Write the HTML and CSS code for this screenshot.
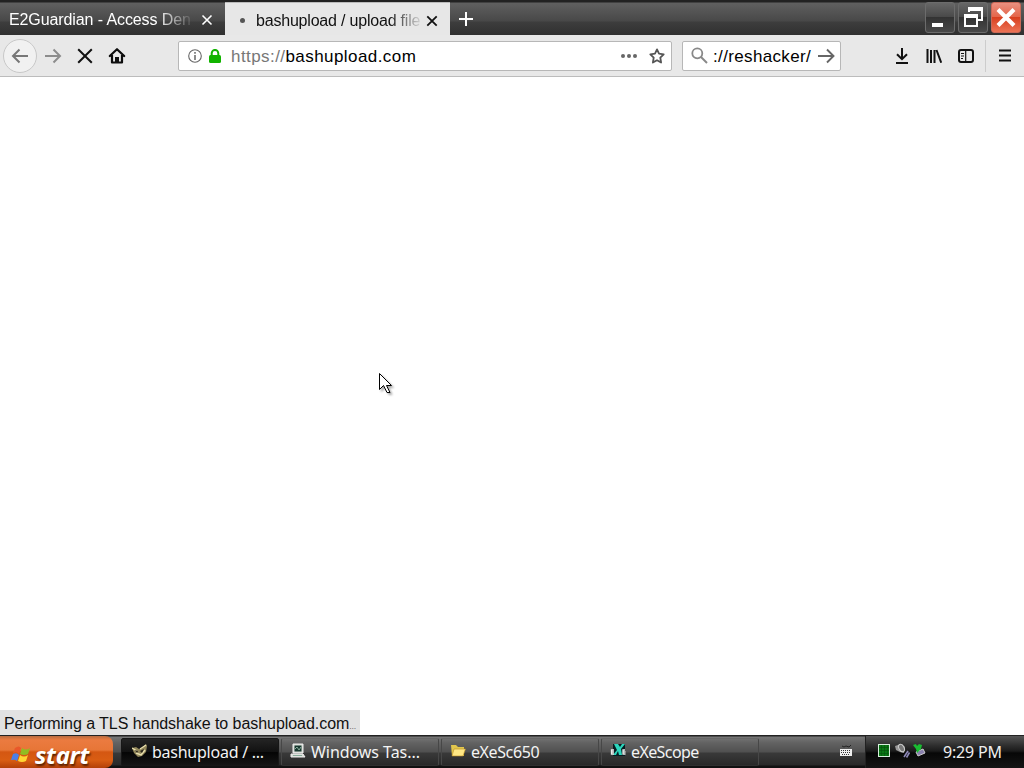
FILE: index.html
```html
<!DOCTYPE html>
<html lang="en">
<head>
<meta charset="utf-8">
<title>bashupload / upload files</title>
<link rel="stylesheet" href="styles.css">
</head>
<body>
<div class="screen">
  <header class="tabs">
    <div class="tab">
      <span class="tab-title">E2Guardian - Access Den</span>
      <svg class="tab-close" width="12" height="12" viewBox="0 0 12 12"><path d="M1.500 1.500l9 9M10.500 1.500l-9 9" stroke="#fff" stroke-width="1.600"/></svg>
    </div>
    <div class="tab active">
      <span class="loading"></span>
      <span class="tab-title">bashupload / upload file</span>
      <svg class="tab-close" width="12" height="12" viewBox="0 0 12 12"><path d="M1.300 1.300l9.400 9.400M10.700 1.300l-9.400 9.400" stroke="#111" stroke-width="1.800"/></svg>
    </div>
    <svg class="new-tab" width="14" height="14" viewBox="0 0 14 14"><path d="M7 0v14M0 7h14" stroke="#fff" stroke-width="2"/></svg>
    <div class="window-buttons">
      <div class="wb"><svg width="30" height="30" viewBox="0 0 30 30"><path d="M7 21h11v4H7z" fill="#fff"/></svg></div>
      <div class="wb"><svg width="30" height="30" viewBox="0 0 30 30"><g fill="none" stroke="#fff"><path d="M11 10V6h13v12h-4" stroke-width="2"/><path d="M10 7h15" stroke-width="4"/><path d="M7 13h12v11H7z" stroke-width="2"/><path d="M6 14h14" stroke-width="4"/></g></svg></div>
      <div class="wb close"><svg width="30" height="30" viewBox="0 0 30 30"><path d="M7 7.500l16 16M23 7.500l-16 16" stroke="#fff" stroke-width="4.200"/></svg></div>
    </div>
  </header>
  <nav class="toolbar">
    <div class="back"><svg width="18" height="16" viewBox="0 0 18 16"><path d="M17 8H2M8.500 1.500L2 8l6.500 6.500" fill="none" stroke="#777" stroke-width="2"/></svg></div>
    <svg class="forward" width="18" height="16" viewBox="0 0 18 16"><path d="M1 8h15M9.500 1.500L16 8l-6.500 6.500" fill="none" stroke="#8c8c8c" stroke-width="2"/></svg>
    <svg class="stop" width="16" height="16" viewBox="0 0 16 16"><path d="M1.200 1.200l13.600 13.600M14.800 1.200L1.200 14.800" stroke="#111" stroke-width="2"/></svg>
    <svg class="home" width="18" height="18" viewBox="0 0 18 18"><path d="M1.800 9L9 2.200 16.200 9M4 8v7.500h10V8" fill="none" stroke="#0c0c0c" stroke-width="2.200" stroke-linecap="round" stroke-linejoin="round"/><path d="M7 16v-6h4v6z" fill="#111"/></svg>
    <div class="url">
      <svg class="info" width="14" height="14" viewBox="0 0 14 14"><circle cx="7" cy="7" r="6.300" fill="none" stroke="#666" stroke-width="1.100"/><path d="M7 6v5M7 3v1.700" stroke="#666" stroke-width="1.500"/></svg>
      <svg class="lock" width="12" height="14" viewBox="0 0 12 14"><rect y="6" width="12" height="8" rx="1.500" fill="#12b400"/><path d="M2.700 7V4.200a3.300 3.300 0 016.600 0V7" fill="none" stroke="#12b400" stroke-width="2"/></svg>
      <span class="address"><span class="scheme">https://</span>bashupload.com</span>
      <svg class="dots" width="16" height="4" viewBox="0 0 16 4"><g fill="#666"><circle cx="2" cy="2" r="2"/><circle cx="8" cy="2" r="2"/><circle cx="14" cy="2" r="2"/></g></svg>
      <svg class="star" width="16" height="16" viewBox="0 0 16 16"><path d="M8 1.400l2 4.300 4.700.6-3.400 3.300.8 4.900L8 12.200l-4.100 2.300.8-4.900L1.300 6.300 6 5.700z" fill="none" stroke="#555" stroke-width="1.800" stroke-linejoin="round"/></svg>
    </div>
    <div class="search">
      <svg width="17" height="17" viewBox="0 0 17 17"><circle cx="6.300" cy="6.300" r="5" fill="none" stroke="#888" stroke-width="1.800"/><path d="M10 10l6 6" stroke="#888" stroke-width="2"/></svg>
      <span class="query">://reshacker/</span>
      <svg class="go" width="17" height="16" viewBox="0 0 17 16"><path d="M0 8h15M9 1.500L15.500 8 9 14.500" fill="none" stroke="#666" stroke-width="1.900"/></svg>
    </div>
    <div class="tools">
      <svg width="14" height="16" viewBox="0 0 14 16"><path d="M7 0v11M2 6.200l5 5 5-5M1 15h12" fill="none" stroke="#111" stroke-width="2"/></svg>
      <svg width="16" height="16" viewBox="0 0 16 16"><path d="M1.500 1v14M5 2v13M8.500 2v13M10.500 2l4.700 12.700" fill="none" stroke="#111" stroke-width="2"/></svg>
      <svg width="16" height="14" viewBox="0 0 16 14"><rect x="1" y="1" width="14" height="12" rx="2" fill="none" stroke="#111" stroke-width="2"/><path d="M7.700 1v12M3 4.500h3M3 7h3M3 9.500h2" stroke="#111" stroke-width="1.200"/></svg>
      <span class="divider"></span>
      <svg width="12" height="13" viewBox="0 0 12 13"><path d="M0 1.500h12M0 6.500h12M0 11.500h12" stroke="#111" stroke-width="2"/></svg>
    </div>
  </nav>
  <main class="page"><div class="status">Performing a TLS handshake to bashupload.com<span class="ellipsis">…</span></div></main>
  <footer class="taskbar">
    <div class="start">
      <svg width="20" height="19" viewBox="0 0 20 19"><path d="M4 3q4-3 6 0L8 9Q6 6 2 8z" fill="#e9582a"/><path d="M11 3q4 3 8 0l-2 6q-4 2-8 0z" fill="#91bd22"/><path d="M2 9q4-2 6 1l-2 6q-2-2-6-1z" fill="#4c7fe8"/><path d="M9 10q4 3 8 0l-2 6q-4 2-8 0z" fill="#ffd633"/></svg>
      <span>start</span>
    </div>
    <div class="tasks">
      <div class="task current"><svg width="16" height="16" viewBox="0 0 16 16"><path d="M0 5l4-1 3 2 3-1 4-4 1 2-1 6-4 4-4 1-4-4z" fill="#91865a"/><path d="M0 5l5 3M8 6l6-4M4 10l5 2 4-5" fill="none" stroke="#e9dfad" stroke-width="1.400"/><path d="M3 7l3 1-1 2zM8 8l4-2-2 4z" fill="#29251b"/></svg><span class="label l1">bashupload / ...</span></div>
      <div class="task"><svg width="16" height="16" viewBox="0 0 16 16"><path d="M3 1h10v9H3zM1 11h12l2 3H1z" fill="#d4d7d1" stroke="#eee"/><path d="M4.500 2.500h7v6h-7z" fill="#17382f"/><path d="M5 6l2-2 2 3 2-3M3 12.500h9" fill="none" stroke="#87aa99"/></svg><span class="label l2">Windows Tas...</span></div>
      <div class="task"><svg width="16" height="16" viewBox="0 0 16 16"><path d="M1 2h5l2 2h6v9H2z" fill="#e2c64d"/><path d="M4 6h11.500L13 13H2z" fill="#ffe784" stroke="#b88b22" stroke-width=".6"/></svg><span class="label l3">eXeSc650</span></div>
      <div class="task"><svg width="16" height="16" viewBox="0 0 16 16"><path d="M3 1h12v12H3z" fill="#071c21"/><path d="M4 1h4l2 3 2-3h3l-4 5 1 6H9L8 8l-2 4H3l4-5z" fill="#2bd5bc"/><path d="M4 7H1.500v4H4M1 9h3M15 7h-2v4h2.500M13 9h2.500" fill="none" stroke="#eee" stroke-width="1.300"/></svg><span class="label l4">eXeScope</span></div>
    </div>
    <svg class="keyboard" width="14" height="14" viewBox="0 0 14 14"><path d="M3 3l2 1 2-1 3 1 2-2" fill="none" stroke="#222"/><path d="M1 6h12v7H1z" fill="#eee"/><path d="M2 7.500h10M2 9.500h10M3 11.500h8" stroke="#333" stroke-dasharray="1 1"/></svg>
    <div class="tray">
      <svg width="48" height="18" viewBox="0 0 48 18"><rect x=".5" y="3.500" width="11" height="12" fill="#087714" stroke="#d7eedc"/><path d="M1 6.500h10M1 9.500h10M1 12.500h10M3.500 4v11M6.500 4v11M9.500 4v11" stroke="#06540d" stroke-width=".7"/><path d="M17 5l3-1 4-1 3 3-1 6-4-1-4-2z" fill="#999"/><ellipse cx="23.500" cy="7" rx="2.500" ry="4" transform="rotate(-30 23.500 7)" fill="#777" stroke="#ccc"/><path d="M26 16l4-6M28.500 16.500l3-5" stroke="#8d88b7" stroke-width="1.600"/><path d="M38 11l2 4 7-3-2-4z" fill="#8980ad" stroke="#ccc"/><path d="M35 4l3-1 1 2 2-2 3 1-1 4-4 4-1-4z" fill="#19bd31"/></svg>
      <time>9:29 PM</time>
    </div>
  </footer>
  <svg class="pointer" width="20" height="26" viewBox="0 0 20 26"><path d="M1.500 1.500v16l4-4 3.500 7h3l-3.500-7h5z" fill="#fff" stroke="#000"/></svg>
</div>
</body>
</html>
```
FILE: styles.css
```css
* { box-sizing: border-box; }
body { margin: 0; overflow: hidden; }
svg { display: block; flex: none; }
.screen { position: relative; width: 1024px; height: 768px; display: grid; grid-template-rows: 35px 42px 658px 33px; background: #fff; font-family: "Liberation Sans", sans-serif; }
.tabs { display: flex; background: linear-gradient(#222 0, #222 2px, #606060 3px, #555 11px, #484848 21px, #3d3d3d 22px, #303030 35px); }
.tab { width: 225px; height: 35px; padding: 5px 12px 0 9px; display: flex; align-items: center; color: #fff; font-size: 16px; white-space: nowrap; }
.tab-title { width: 184px; letter-spacing: -.1px; line-height: 22px; -webkit-mask-image: linear-gradient(90deg, #000 80%, transparent 101%); mask-image: linear-gradient(90deg, #000 80%, transparent 101%); }
.tab-close { margin-left: auto; }
.tab.active { height: 33px; margin-top: 2px; padding-top: 3px; background: #e7e7e7; border-top: 1px solid #bbb; color: #111; }
.loading { width: 5px; height: 5px; margin: 0 11px 0 6px; border-radius: 50%; background: #555; }
.active .tab-title { width: 166px; letter-spacing: -.2px; }
.new-tab { margin: 12px 0 0 9px; }
.window-buttons { display: flex; gap: 3px; margin: 2px 3px 0 auto; }
.wb { width: 30px; height: 31px; border: 1px solid #6c6c6c; border-radius: 3px; background: linear-gradient(#676767, #494949 48%, #333 50%, #494949); }
.wb svg { margin: -1px; }
.wb.close { border-color: #ca6857; background: linear-gradient(#e99080, #e46549 48%, #d84020 50%, #ec7355); }
.toolbar { display: flex; align-items: center; background: #e8e8e8; border-bottom: 1px solid #bcbcbc; }
.back { width: 34px; height: 34px; margin-left: 3px; border: 1px solid #c8c8c8; border-radius: 50%; background: #f1f1f1; display: grid; place-items: center; }
.forward { margin-left: 7px; }
.stop { margin-left: 15px; }
.home { margin-left: 15px; }
.url, .search { height: 30px; border: 1px solid #b7b7b7; border-radius: 2px; background: #fff; display: flex; align-items: center; }
.url { width: 494px; margin-left: 52px; padding: 0 6px 0 9px; }
.lock { margin-left: 7px; }
.address { margin-left: 10px; padding-top: 2px; font-size: 17px; letter-spacing: .43px; line-height: 22px; }
.scheme { color: #777; }
.dots { margin-left: auto; }
.star { margin-left: 12px; }
.search { width: 159px; margin-left: 10px; padding: 0 5px 0 8px; }
.query { margin-left: 5px; padding-top: 2px; font-size: 17px; letter-spacing: .35px; line-height: 22px; white-space: nowrap; }
.go { margin-left: auto; }
.tools { display: flex; align-items: center; margin-left: 54px; gap: 17px; }
.tools svg:nth-child(2) { margin-right: -1px; }
.divider { width: 1px; height: 32px; margin: 0 -4px 0 -6px; background: #ccc; }
.page { display: flex; align-items: flex-end; background: #fff; }
.status { width: 360px; height: 25px; padding-left: 4px; background: #e2e2e2; color: #111; font-size: 16px; letter-spacing: -.05px; line-height: 27px; white-space: nowrap; }
.ellipsis { display: inline-block; font-size: 7px; line-height: 1; }
.taskbar { display: flex; background: linear-gradient(#222 0, #222 1px, #777 2px, #626262 8px, #505050 17px, #393939 18px, #292929 30px, #111 31px); }
.start { width: 113px; margin-top: 1px; padding-left: 11px; border-radius: 0 8px 8px 0; background: linear-gradient(#b86b40, #eb7b40 4px, #e77637 14px, #d45712 16px, #d95d13 24px, #b34008); display: flex; align-items: center; gap: 4px; font: italic bold 24px/30px "Noto Sans", sans-serif; letter-spacing: -.3px; color: #fff; text-shadow: 1px 2px 2px #562000; }
.start svg { margin-top: 5px; }
.start span { margin-top: 5px; }
.tasks { display: flex; gap: 2px; margin: 3px 0 0 8px; }
.task { width: 158px; height: 28px; border: 1px solid #474747; border-top-color: #686868; border-bottom-color: #303030; border-radius: 2px; display: flex; align-items: center; padding: 0 0 2px 8px; }
.task.current { background: linear-gradient(#242424, #111 50%, #050505 52%, #151515); border-color: #171717; padding-left: 10px; }
.label { margin: 2px 0 0 5px; font: 16px/24px "Noto Sans", sans-serif; color: #f3f3f3; white-space: nowrap; }
.l1 { margin-left: 4px; letter-spacing: -.25px; }
.l2 { letter-spacing: -.05px; }
.l3 { letter-spacing: -.4px; }
.l4 { letter-spacing: -.6px; }
.keyboard { margin: 8px 12px 0 auto; }
.tray { width: 159px; margin-top: 1px; border-left: 1px solid #222; background: linear-gradient(#555, #303030 9px, #1b1b1b 15px, #070707 17px, #151515); display: flex; padding: 5px 0 0 12px; color: #eee; font: 16px/22px "Noto Sans", sans-serif; }
.tray time { margin-left: 17px; letter-spacing: -.2px; white-space: nowrap; }
.pointer { position: absolute; left: 378px; top: 372px; filter: drop-shadow(2px 2px 1px #0005); }
```
